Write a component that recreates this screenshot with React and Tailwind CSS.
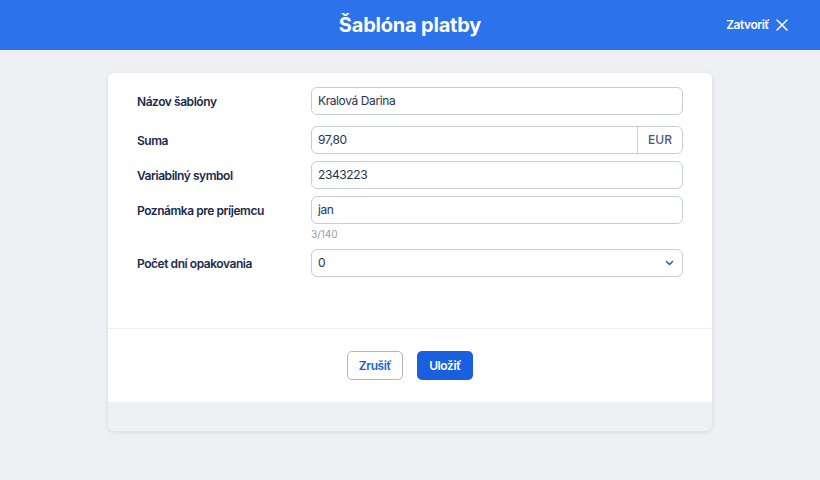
import React from "react";

const font = { fontFamily: "Inter, 'Noto Sans', sans-serif" };

function Row({ label, children, className = "" }) {
  return (
    <div className={"flex items-start " + className}>
      <div className="w-[174px] shrink-0 h-[28px] pt-[1px] flex items-center text-[12px] tracking-[-0.45px] font-semibold text-[#1b2a4b]">{label}</div>
      <div className="flex-1">{children}</div>
    </div>
  );
}

function Input({ value }) {
  return (
    <div className="h-[28px] rounded-[6px] border border-[#c6cdd8] bg-white flex items-center px-[6px] text-[12px] tracking-[-0.4px] text-[#253353]">
      {value}
    </div>
  );
}

export default function App() {
  return (
    <div style={font} className="w-[820px] h-[480px] bg-[#eef0f3] flex flex-col">
      <div className="h-[50px] bg-[#2b72eb] flex items-center justify-center relative shrink-0">
        <div className="text-white text-[20px] font-bold tracking-[-0.2px]">Šablóna platby</div>
        <div className="absolute right-[32px] top-0 h-full flex items-center gap-[7px] text-white text-[12px] tracking-[-0.45px] font-semibold">
          <span>Zatvoriť</span>
          <svg width="12" height="12" viewBox="0 0 12 12" fill="none" stroke="white" strokeWidth="1.5" strokeLinecap="round">
            <path d="M1 1L11 11M11 1L1 11" />
          </svg>
        </div>
      </div>
      <div className="flex justify-center pt-[23px]">
        <div className="w-[604px] bg-[#eef0f3] rounded-[6px] shadow-[0_1px_4px_rgba(20,30,60,0.12)] overflow-hidden">
          <div className="bg-white px-[29px] pt-[14px] h-[255px]">
            <Row label="Názov šablóny"><Input value="Kralová Darina" /></Row>
            <Row label="Suma" className="mt-[11px]">
              <div className="h-[28px] rounded-[6px] border border-[#c6cdd8] bg-white flex items-stretch text-[12px] tracking-[-0.4px] text-[#253353]">
                <div className="flex-1 flex items-center px-[6px]">97,80</div>
                <div className="w-[45px] border-l border-[#c6cdd8] flex items-center justify-center text-[#4a5878] font-medium tracking-normal">EUR</div>
              </div>
            </Row>
            <Row label="Variabilný symbol" className="mt-[7px]"><Input value="2343223" /></Row>
            <Row label="Poznámka pre príjemcu" className="mt-[7px]">
              <Input value="jan" />
              <div className="text-[10px] text-[#939cad] mt-[4px] leading-[13px]">3/140</div>
            </Row>
            <Row label="Počet dní opakovania" className="mt-[8px]">
              <div className="h-[28px] rounded-[6px] border border-[#c6cdd8] bg-white flex items-center justify-between px-[6px] text-[12px] text-[#253353]">
                <span>0</span>
                <svg width="9" height="6" viewBox="0 0 9 6" fill="none" stroke="#2b5fc8" strokeWidth="1.6" strokeLinecap="round" strokeLinejoin="round" className="mr-[2px]">
                  <path d="M1.5 1.5L4.5 4.5L7.5 1.5" />
                </svg>
              </div>
            </Row>
          </div>
          <div className="h-[1px] bg-[#eef0f3]" />
          <div className="bg-white h-[73px] flex items-center justify-center gap-[14px]">
            <button className="w-[56px] h-[29px] rounded-[5px] border border-[#aeb7c6] bg-white text-[#1a5fdc] text-[12px] tracking-[-0.4px] font-semibold">Zrušiť</button>
            <button className="w-[56px] h-[29px] rounded-[5px] bg-[#1a5fe0] text-white text-[12px] tracking-[-0.4px] font-semibold">Uložiť</button>
          </div>
          <div className="h-[29px] bg-[#eef0f3]" />
        </div>
      </div>
    </div>
  );
}
